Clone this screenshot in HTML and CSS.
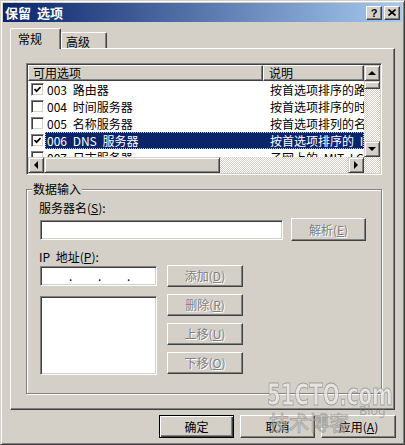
FILE: index.html
```html
<!DOCTYPE html>
<html lang="zh-CN">
<head>
<meta charset="utf-8">
<title>保留 选项</title>
<link rel="stylesheet" href="styles.css">
</head>
<body>
<div class="window">
  <div class="titlebar">
    <span class="title">保留 选项</span>
    <div class="title-btns">
      <div class="tbtn help">?</div>
      <div class="tbtn"><svg width="8" height="7" viewBox="0 0 8 7"><path d="M0.5 0.5 L7.5 6.5 M7.5 0.5 L0.5 6.5" stroke="#000" stroke-width="1.6"/></svg></div>
    </div>
  </div>

  <div class="tabs">
    <div class="tab active">常规</div>
    <div class="tab">高级</div>
  </div>

  <div class="panel">
    <div class="listview">
      <div class="lv-main">
        <div class="lv-head">
          <div class="hcell h1">可用选项</div>
          <div class="hcell h2">说明</div>
        </div>
        <div class="row">
          <div class="c-check"><span class="cb checked"><svg width="7" height="7" viewBox="0 0 7 7"><path d="M0.5 3 L2.6 5.2 L6.6 1" fill="none" stroke="#000" stroke-width="1.7"/></svg></span></div>
          <div class="sel"><span class="c-name">003 路由器</span><span class="c-desc">按首选项排序的路由器地址列表</span></div>
        </div>
        <div class="row">
          <div class="c-check"><span class="cb"></span></div>
          <div class="sel"><span class="c-name">004 时间服务器</span><span class="c-desc">按首选项排序的时间服务器列表</span></div>
        </div>
        <div class="row">
          <div class="c-check"><span class="cb"></span></div>
          <div class="sel"><span class="c-name">005 名称服务器</span><span class="c-desc">按首选项排列的名称服务器列表</span></div>
        </div>
        <div class="row">
          <div class="c-check"><span class="cb checked"><svg width="7" height="7" viewBox="0 0 7 7"><path d="M0.5 3 L2.6 5.2 L6.6 1" fill="none" stroke="#000" stroke-width="1.7"/></svg></span></div>
          <div class="sel selected"><span class="c-name">006 DNS 服务器</span><span class="c-desc">按首选项排序的 IP 地址列表</span></div>
        </div>
        <div class="row">
          <div class="c-check"><span class="cb"></span></div>
          <div class="sel"><span class="c-name">007 日志服务器</span><span class="c-desc">子网上的 MIT LCS 日志服务器列表</span></div>
        </div>
      </div>
      <div class="vscroll">
        <div class="sb-btn"><span class="arr up"></span></div>
        <div class="thumb v"></div>
        <div class="track"></div>
        <div class="sb-btn"><span class="arr down"></span></div>
      </div>
      <div class="hscroll">
        <div class="sb-btn"><span class="arr left"></span></div>
        <div class="thumb h"></div>
        <div class="track"></div>
        <div class="sb-btn"><span class="arr right"></span></div>
      </div>
      <div class="corner"></div>
    </div>

    <div class="group">
      <span class="group-label">数据输入</span>
      <div class="label">服务器名(<u>S</u>):</div>
      <div class="row1">
        <div class="edit server"></div>
        <div class="btn disabled resolve">解析(<u>E</u>)</div>
      </div>
      <div class="label ip-label">IP 地址(<u>P</u>):</div>
      <div class="row2">
        <div class="left-col">
          <div class="edit ip"><span class="dot">.</span><span class="dot">.</span><span class="dot">.</span></div>
          <div class="edit box"></div>
        </div>
        <div class="right-col">
          <div class="btn disabled small">添加(<u>D</u>)</div>
          <div class="btn disabled small">删除(<u>R</u>)</div>
          <div class="btn disabled small">上移(<u>U</u>)</div>
          <div class="btn disabled small">下移(<u>O</u>)</div>
        </div>
      </div>
    </div>
  </div>

  <div class="actions">
    <div class="btn default">确定</div>
    <div class="btn">取消</div>
    <div class="btn">应用(<u>A</u>)</div>
  </div>

  <div class="watermark">
    <span class="wm-big">51CTO.com</span>
    <span class="wm-cn">技术博客</span>
    <span class="wm-blog">Blog</span>
  </div>
</div>
</body>
</html>
```

FILE: styles.css
```css
* { box-sizing: border-box; }
html, body { margin: 0; padding: 0; }
body {
  background: #d4d0c8;
  font-family: "Noto Sans CJK SC", "Liberation Sans", sans-serif;
  font-size: 12px;
  color: #000;
}
u { text-decoration: underline; text-underline-offset: 1px; }

.window {
  position: relative;
  width: 405px;
  height: 445px;
  background: #d4d0c8;
  border: 1px solid;
  border-color: #d4d0c8 #404040 #404040 #d4d0c8;
  box-shadow: inset 1px 1px #fff, inset -1px -1px #808080;
  padding: 2px;
  display: flex;
  flex-direction: column;
  overflow: hidden;
}

/* title bar */
.titlebar {
  height: 19px;
  flex: none;
  background: linear-gradient(to right, #0a246a, #a6caf0);
  display: flex;
  align-items: center;
  padding: 0 2px;
}
.title {
  color: #fff;
  font-weight: bold;
  font-size: 13px;
  line-height: 19px;
  margin-left: 0;
  white-space: pre;
  word-spacing: 3px;
}
.title-btns { margin-left: auto; display: flex; gap: 2px; }
.tbtn {
  width: 16px;
  height: 14px;
  background: #d4d0c8;
  border: 1px solid;
  border-color: #fff #404040 #404040 #fff;
  box-shadow: inset -1px -1px #808080;
  display: flex;
  align-items: center;
  justify-content: center;
}
.tbtn.help {
  font-family: "Liberation Sans", sans-serif;
  font-weight: bold;
  font-size: 11px;
  line-height: 12px;
}

/* tabs */
.tabs {
  height: 26px;
  flex: none;
  display: flex;
  align-items: flex-end;
  padding-left: 7px;
  position: relative;
  z-index: 1;
}
.tab {
  background: #d4d0c8;
  border-top: 1px solid #fff;
  border-left: 1px solid #fff;
  border-right: 1px solid #404040;
  box-shadow: inset -1px 0 #808080;
  border-radius: 2px 2px 0 0;
}
.tab.active {
  width: 51px;
  height: 21px;
  margin-bottom: -1px;
  padding-left: 7px;
  line-height: 20px;
}
.tab:not(.active) {
  width: 46px;
  height: 16px;
  padding-left: 4px;
  line-height: 17px;
}

.panel {
  margin-left: 7px;
  width: 385px;
  height: 362px;
  flex: none;
  border: 1px solid;
  border-color: #fff #404040 #404040 #fff;
  box-shadow: inset -1px -1px #808080;
  padding: 14px 0 0 15px;
}

/* list view */
.listview {
  width: 356px;
  height: 112px;
  border: 1px solid;
  border-color: #808080 #fff #fff #808080;
  box-shadow: inset 1px 1px #404040, inset -1px -1px #d4d0c8;
  padding: 1px;
  background: #fff;
  display: grid;
  grid-template-columns: 336px 16px;
  grid-template-rows: 92px 16px;
}
.lv-main { overflow: hidden; background: #fff; }
.lv-head { display: flex; height: 16px; }
.hcell {
  background: #d4d0c8;
  border: 1px solid;
  border-color: #fff #404040 #404040 #fff;
  box-shadow: inset -1px -1px #808080;
  line-height: 14px;
  white-space: nowrap;
}
.h1 { width: 235px; padding-left: 4px; }
.h2 { flex: 1; padding-left: 5px; }

.row { display: flex; height: 17px; line-height: 17px; white-space: pre; }
.c-check { width: 17px; flex: none; padding: 2px 0 0 3px; }
.cb {
  display: flex;
  align-items: center;
  justify-content: center;
  width: 13px;
  height: 13px;
  background: #fff;
  border: 1px solid;
  border-color: #808080 #fff #fff #808080;
  box-shadow: inset 1px 1px #404040, inset -1px -1px #d4d0c8;
}
.sel { flex: 1; display: flex; overflow: hidden; }
.sel.selected { background: #0a246a; color: #fff; outline: 1px dotted #a6caf0; outline-offset: -1px; }
.c-name { width: 218px; flex: none; padding-left: 2px; overflow: hidden; word-spacing: 3px; }
.c-desc { flex: 1; padding-left: 7px; overflow: hidden; word-spacing: 3px; }

/* scrollbars */
.vscroll { display: flex; flex-direction: column; }
.hscroll { display: flex; }
.sb-btn, .thumb {
  background: #d4d0c8;
  border: 1px solid;
  border-color: #d4d0c8 #404040 #404040 #d4d0c8;
  box-shadow: inset 1px 1px #fff, inset -1px -1px #808080;
}
.sb-btn {
  width: 16px;
  height: 16px;
  flex: none;
  display: flex;
  align-items: center;
  justify-content: center;
}
.thumb.v { height: 8px; flex: none; }
.thumb.h { width: 176px; flex: none; }
.track, .corner {
  flex: 1;
  background: repeating-conic-gradient(#fff 0 25%, #d4d0c8 0 50%) 0 0 / 2px 2px;
}
.arr { width: 0; height: 0; }
.arr.up { border-left: 4px solid transparent; border-right: 4px solid transparent; border-bottom: 4px solid #000; }
.arr.down { border-left: 4px solid transparent; border-right: 4px solid transparent; border-top: 4px solid #000; }
.arr.left { border-top: 4px solid transparent; border-bottom: 4px solid transparent; border-right: 4px solid #000; }
.arr.right { border-top: 4px solid transparent; border-bottom: 4px solid transparent; border-left: 4px solid #000; }

/* group */
.group {
  position: relative;
  margin-top: 14px;
  width: 356px;
  height: 205px;
  border: 1px solid #808080;
  box-shadow: inset 1px 1px #fff, 1px 1px #fff;
  padding: 10px 0 0 13px;
}
.group-label {
  position: absolute;
  top: -8px;
  left: 5px;
  padding: 0 1px;
  background: #d4d0c8;
  line-height: 14px;
}
.label { line-height: 16px; height: 16px; margin-left: -1px; word-spacing: 3px; }
.ip-label { margin-top: 8px; }

.edit {
  background: #fff;
  border: 1px solid;
  border-color: #808080 #fff #fff #808080;
  box-shadow: inset 1px 1px #404040, inset -1px -1px #d4d0c8;
}
.row1 { display: flex; align-items: center; margin-top: 2px; height: 23px; }
.edit.server { width: 243px; height: 20px; }
.btn {
  width: 75px;
  height: 23px;
  background: #d4d0c8;
  border: 1px solid;
  border-color: #fff #404040 #404040 #fff;
  box-shadow: inset -1px -1px #808080;
  display: flex;
  align-items: center;
  justify-content: center;
  line-height: 14px;
  white-space: nowrap;
}
.btn.disabled { color: #808080; text-shadow: 1px 1px #fff; }
.btn.resolve { margin-left: 8px; }
.btn.default {
  border-color: #000;
  box-shadow: inset 1px 1px #fff, inset -1px -1px #404040, inset -2px -2px #808080;
}

.row2 { display: flex; gap: 10px; }
.left-col { display: flex; flex-direction: column; width: 117px; }
.edit.ip {
  height: 20px;
  margin-top: 1px;
  display: flex;
  padding-left: 28px;
  line-height: 17px;
}
.dot { width: 29px; flex: none; }
.edit.box { height: 79px; margin-top: 10px; }
.right-col { display: flex; flex-direction: column; gap: 7px; }
.btn.small { width: 76px; height: 22px; }

/* bottom buttons */
.actions {
  display: flex;
  justify-content: flex-end;
  gap: 6px;
  margin-top: 5px;
  padding-right: 6px;
}

/* watermark overlay */
.watermark { position: absolute; left: 0; top: 0; width: 100%; height: 100%; pointer-events: none; }
.wm-big {
  position: absolute;
  left: 266px;
  top: 375px;
  font-family: "DejaVu Sans", sans-serif;
  font-weight: bold;
  font-size: 31px;
  line-height: 36px;
  white-space: nowrap;
  transform: scaleX(0.64);
  transform-origin: left top;
  color: rgba(235, 235, 235, 0.75);
  -webkit-text-stroke: 1px rgba(120, 120, 120, 0.6);
}
.wm-cn {
  position: absolute;
  left: 268px;
  top: 409px;
  font-size: 20px;
  line-height: 26px;
  white-space: nowrap;
  color: rgba(235, 235, 235, 0.45);
  -webkit-text-stroke: 1px rgba(120, 120, 120, 0.5);
}
.wm-blog {
  position: absolute;
  left: 358px;
  top: 403px;
  font-family: "DejaVu Sans", sans-serif;
  font-size: 12px;
  white-space: nowrap;
  color: rgba(130, 130, 130, 0.55);
}
```
